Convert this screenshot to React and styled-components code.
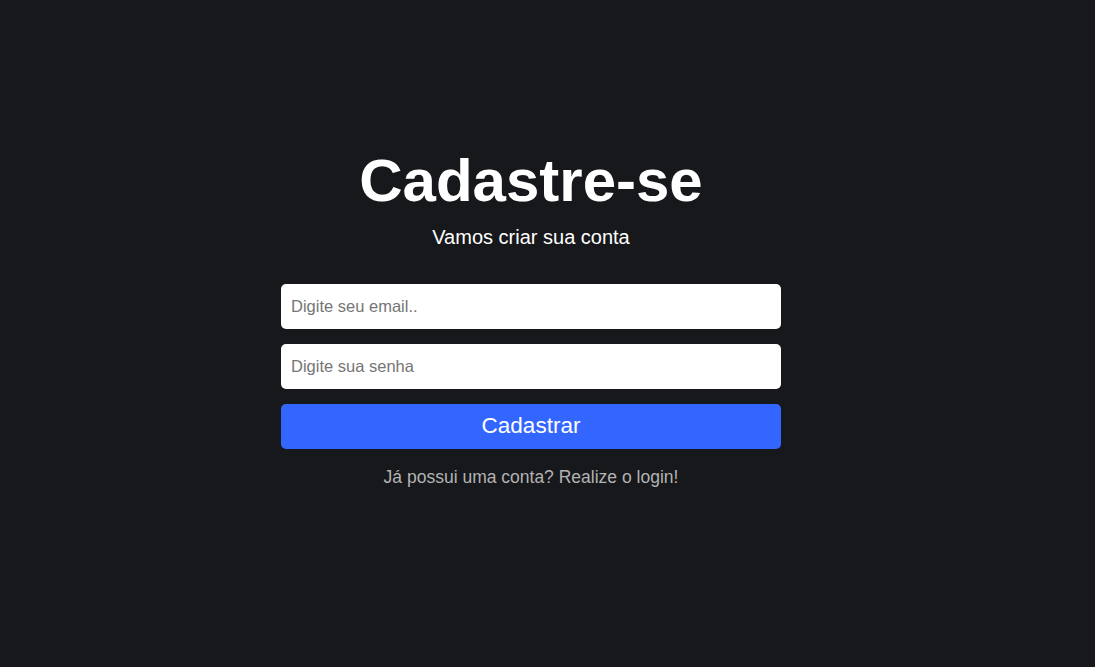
import React from 'react';
import styled, { createGlobalStyle } from 'styled-components';

const GlobalStyle = createGlobalStyle`
  * { box-sizing: border-box; }
  body {
    margin: 0;
    background-color: #17181c;
    font-family: Arial, "Liberation Sans", sans-serif;
  }
`

const Page = styled.main`
  min-height: 100vh;
  display: flex;
  align-items: center;
  justify-content: center;
  padding: 0 33px 34px 0;
`

const Wrapper = styled.div`
  width: 500px;
  display: flex;
  flex-direction: column;
  align-items: center;
`

const Title = styled.h1`
  margin: 0;
  font-size: 60px;
  font-weight: bold;
  line-height: 69px;
  color: #ffffff;
`

const Subtitle = styled.p`
  margin: 11px 0 35px 0;
  font-size: 20px;
  line-height: 23px;
  color: #ffffff;
`

const Form = styled.form`
  width: 100%;
  display: flex;
  flex-direction: column;
  gap: 15px;
`

const Input = styled.input`
  width: 100%;
  height: 45px;
  border: none;
  border-radius: 5px;
  padding: 0 10px;
  background-color: #ffffff;
  color: #2d333f;
  font-family: Arial, "Liberation Sans", sans-serif;
  font-size: 16.5px;
  &::placeholder {
    color: #757575;
  }
  &:focus {
    outline: none;
  }
`

const SubmitButton = styled.button`
  width: 100%;
  height: 45px;
  border: none;
  border-radius: 5px;
  background-color: #3366ff;
  color: #ffffff;
  font-family: Arial, "Liberation Sans", sans-serif;
  font-size: 22.5px;
  cursor: pointer;
`

const LoginLink = styled.a`
  margin-top: 18px;
  font-size: 17.5px;
  line-height: 21px;
  color: #b3b3b3;
  text-decoration: none;
  cursor: pointer;
`

export default function App() {
  return (
    <>
      <GlobalStyle />
      <Page>
        <Wrapper>
          <Title>Cadastre-se</Title>
          <Subtitle>Vamos criar sua conta</Subtitle>
          <Form onSubmit={(e) => e.preventDefault()}>
            <Input type="email" placeholder="Digite seu email.." />
            <Input type="password" placeholder="Digite sua senha" />
            <SubmitButton type="submit">Cadastrar</SubmitButton>
          </Form>
          <LoginLink>Já possui uma conta? Realize o login!</LoginLink>
        </Wrapper>
      </Page>
    </>
  )
}
